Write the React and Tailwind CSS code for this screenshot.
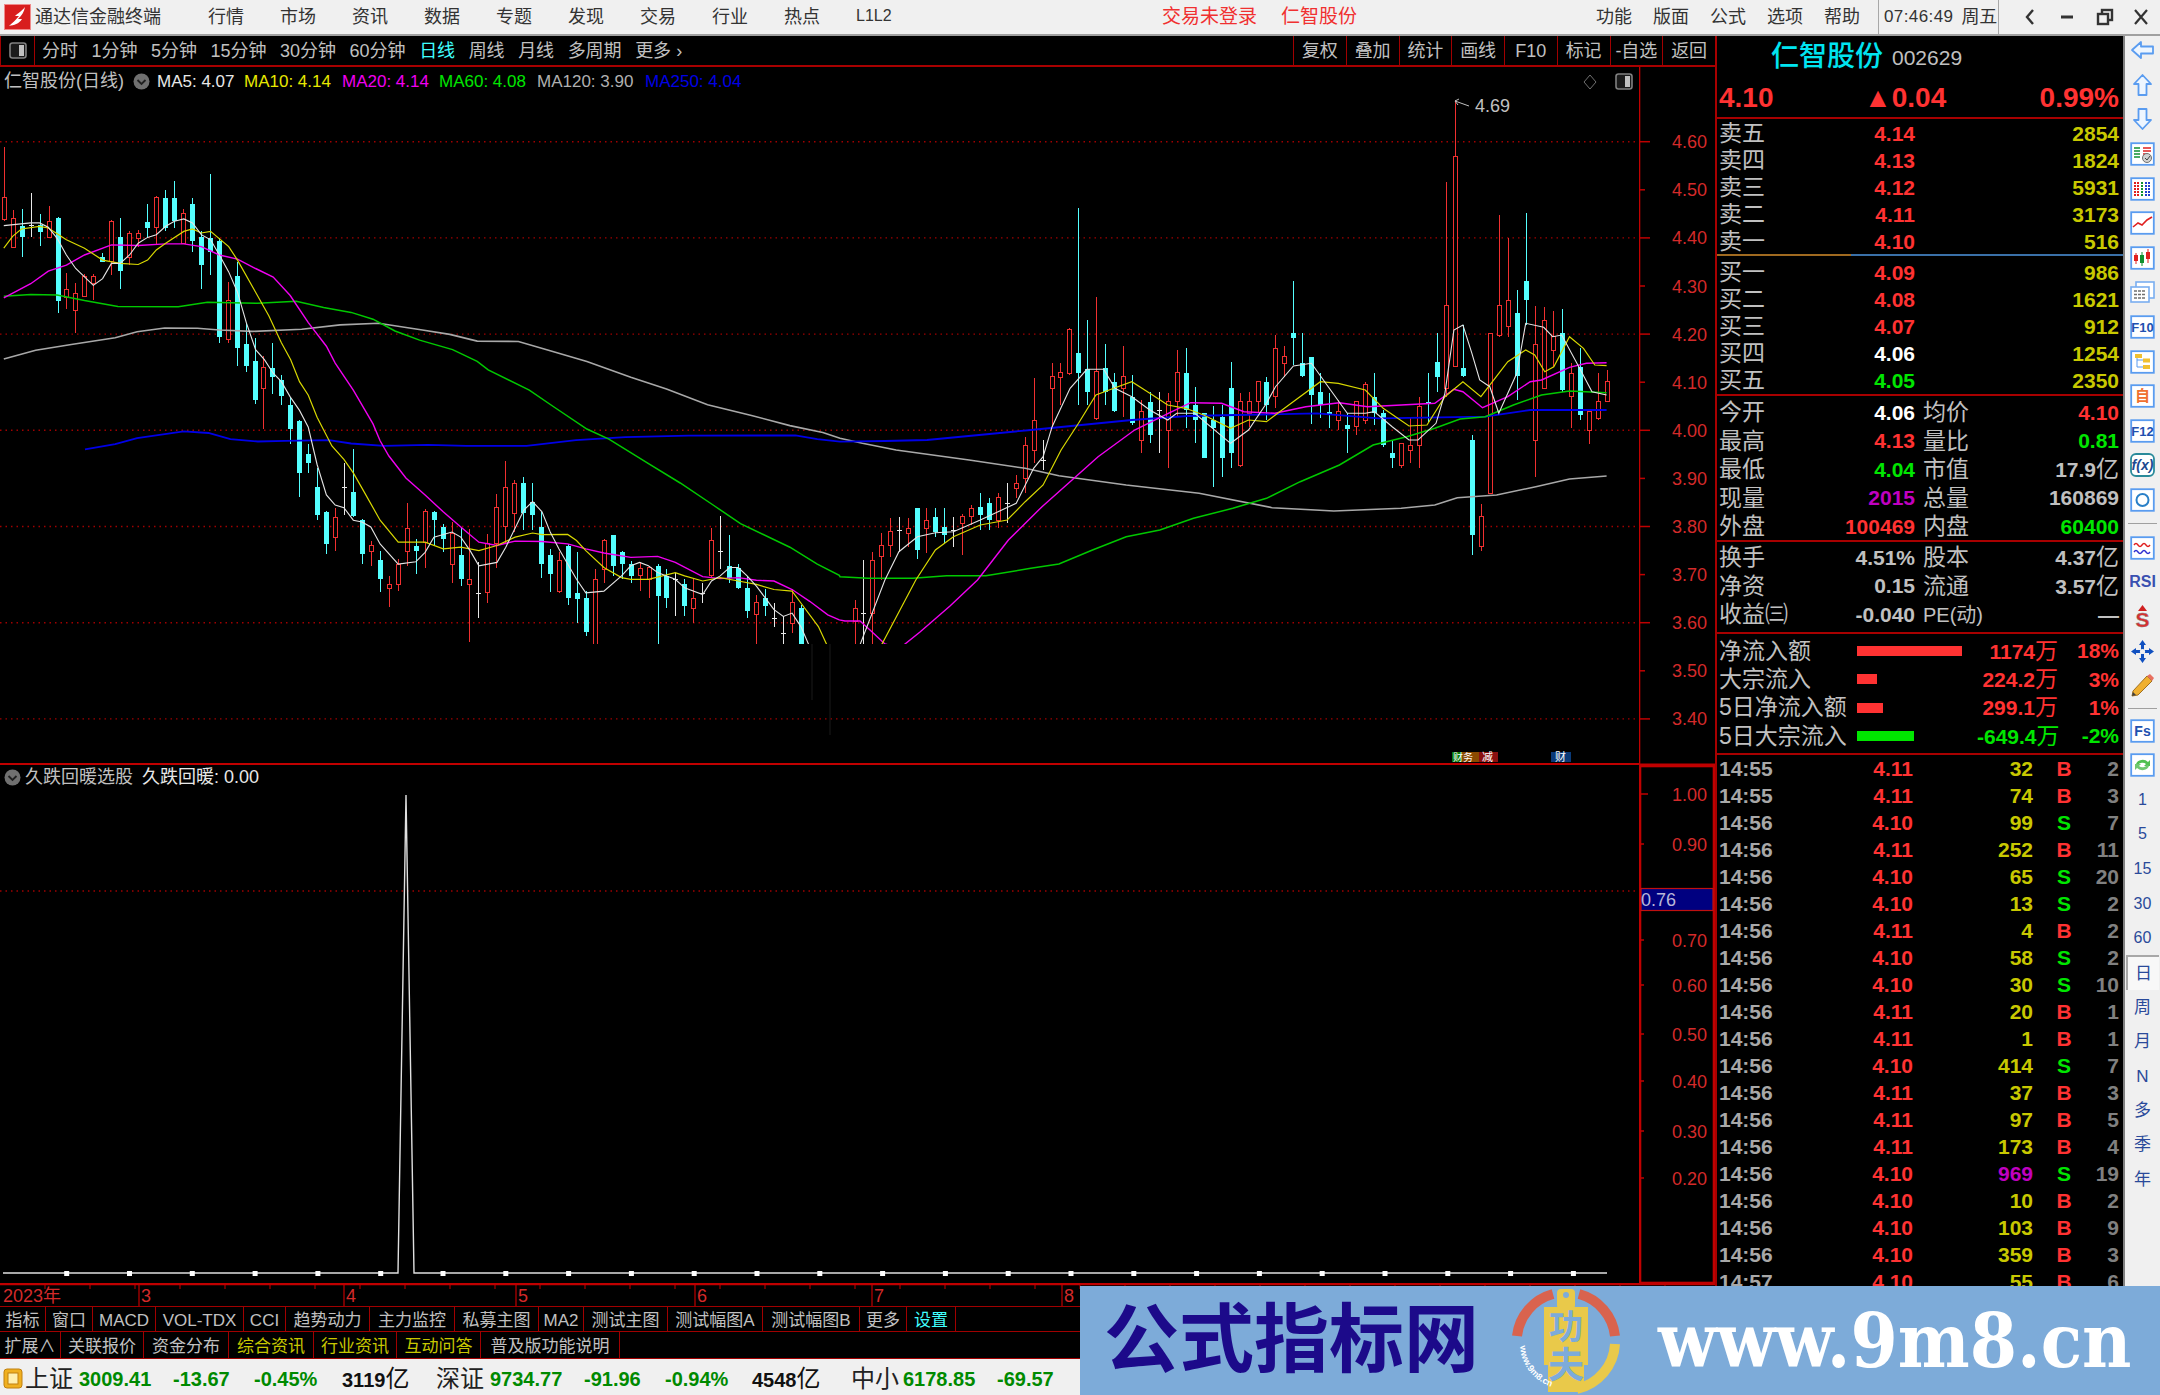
import React from "react";

const Z7X = (x) => x / 1.823;
const Z7Y = (y) => 130 + y / 2.96;
const Z8X = (x) => 840 + x / 1.782;
const Z8Y = (y) => 80 + y / 3;
const CX = (i) => 3.8 + i * 8.955;

const c7 = [
  ["r",50,200,265,270],["r",238,262,347,347],["c",235,285,318,375],["w",187,280,280,318],["c",250,282,303,342],["r",225,272,318,320],["c",258,260,505,542],["r",423,473,495,530],["r",452,485,535,600],["r",425,433,493,495],
  ["r",425,433,455,502],["c",365,375,390,392],["r",265,272,390,430],["c",260,318,418,470],["r",300,305,378,400],["r",295,305,320,345],["c",220,272,290,320],["r",195,200,288,340],["c",178,200,290,300],["c",150,200,270,290],
  ["r",235,248,335,335],["c",200,218,330,360],["c",300,318,400,470],["c",130,320,360,430],["c",320,330,612,630],["r",450,505,620,630],["c",390,432,645,700],["c",570,632,700,715],["c",615,685,800,812],["r",670,702,765,885],
  ["c",630,703,730,780],["c",725,740,788,815],["c",790,815,885,930],["c",858,860,1015,1085],["c",930,958,985,1015],["c",1000,1058,1140,1155],["c",1128,1130,1225,1255],["r",1120,1148,1205,1245],["w",987,1058,1060,1140],["c",945,1072,1142,1145],
  ["c",1150,1155,1255,1285],["r",1218,1230,1247,1290],["c",1245,1272,1328,1368],["r",1320,1345,1358,1412],["r",1270,1285,1345,1365],["r",1105,1180,1248,1290],["c",1210,1230,1245,1315],["r",1122,1130,1222,1295],["c",1128,1130,1155,1230],["c",1165,1175,1212,1250],
  ["r",1160,1195,1285,1340],["c",1175,1258,1330,1350],["r",1180,1330,1345,1515],["w",1280,1370,1372,1445],["r",1195,1225,1370,1400],["r",1078,1118,1225,1297],["r",980,1058,1175,1225],["r",1035,1045,1135,1190],["c",1028,1045,1135,1185],["c",1045,1100,1140,1185],
  ["c",1130,1175,1285,1325],["c",1240,1258,1315,1368],["r",1250,1275,1365,1370],["c",1225,1230,1385,1405],["c",1250,1370,1388,1458],["c",1365,1385,1485,1498],["r",1300,1330,1530,1530],["r",1210,1215,1300,1340],["c",1200,1200,1290,1320],["c",1245,1248,1285,1330],
  ["c",1275,1285,1320,1340],["r",1280,1298,1320,1365],["r",1290,1295,1330,1385],["c",1285,1290,1380,1530],["c",1300,1320,1385,1415],["w",1310,1330,1332,1440],["c",1330,1345,1410,1440],["r",1330,1388,1415,1460],["w",1340,1370,1372,1400],["r",1178,1215,1320,1325],
  ["w",1143,1245,1247,1298],["c",1200,1290,1325,1340],["c",1285,1295,1355,1360],["c",1320,1355,1425,1445],["r",1375,1400,1435,1530],["c",1360,1385,1410,1440],["w",1400,1445,1447,1470],["w",1440,1490,1492,1530],["r",1360,1400,1460,1490],["c",1405,1415,1530,1530],
];
const c95 = ["r",1390,1415,1455,1530];
const c8 = [
  ["w",1440,1600,1602,1700],["r",1415,1440,1600,1700],["r",1360,1395,1430,1500],["r",1315,1355,1395,1430],["w",1310,1350,1352,1415],["r",1315,1345,1360,1400],["c",1283,1283,1410,1438],["r",1285,1320,1345,1420],["c",1285,1310,1355,1370],["c",1285,1340,1365,1390],
  ["w",1310,1350,1352,1400],["r",1303,1310,1330,1425],["r",1275,1285,1310,1335],["c",1240,1280,1305,1350],["c",1255,1270,1320,1350],["r",1240,1252,1320,1345],["w",1210,1270,1272,1330],["r",1185,1210,1225,1255],["r",1070,1095,1195,1240],["r",895,1020,1110,1150],
  ["w",1080,1140,1142,1170],["r",850,890,925,1040],["r",850,878,892,975],["r",745,747,880,885],["c",385,818,878,975],["c",720,868,935,975],["r",652,875,1015,1020],["c",792,865,935,975],["c",880,905,992,995],["r",797,890,925,1010],
  ["c",885,950,1030,1035],["r",960,995,1082,1118],["c",935,965,1065,1090],["w",935,990,992,1120],["r",940,965,1050,1165],["r",810,878,965,1010],["c",805,878,990,1045],["c",920,975,1020,1090],["c",1000,1000,1135,1135],["c",978,1020,1045,1222],
  ["c",975,1010,1135,1190],["c",845,925,1118,1165],["r",940,965,1155,1162],["r",935,965,1000,1040],["r",905,905,965,1000],["c",890,905,975,1020],["r",765,805,950,985],["r",797,830,850,890],["c",602,760,773,855],["c",760,848,888,890],
  ["c",830,832,945,1032],["c",880,935,975,1015],["c",940,995,1003,1045],["r",960,995,1020,1050],["c",1000,1035,1048,1120],["r",965,965,1040,1065],["r",905,912,1020,1032],["c",878,950,1000,1035],["c",990,1000,1095,1100],["c",1080,1120,1135,1165],
  ["r",1090,1090,1155,1163],["r",1012,1095,1110,1150],["r",950,980,1095,1165],["c",878,965,972,1025],["c",760,845,890,935],["r",305,675,925,950],["r",60,228,860,860],["c",735,865,888,890],["c",1065,1080,1365,1425],["r",1272,1310,1400,1412],
  ["r",760,760,1240,1240],["r",405,675,765,770],["r",475,660,738,770],["c",630,700,888,960],["c",400,602,660,735],["r",678,792,1082,1190],["r",680,720,925,925],["r",693,770,810,860],["c",688,760,930,935],["r",850,880,950,1045],
  ["c",805,862,1005,1020],["r",995,995,1050,1092],["r",880,965,1015,1020],["r",870,905,965,965],
];
const candles = [
  ...c7.map((c, i) => ({ i, t: c[0], v: c.slice(1).map(Z7Y) })),
  { i: 95, t: c95[0], v: c95.slice(1).map(Z7Y) },
  ...c8.map((c, k) => ({ i: 96 + k, t: c[0], v: c.slice(1).map(Z8Y) })),
];

const pts = (z7, mid, z8) =>
  [
    ...z7.filter((p) => Z7X(p[0]) < 840).map((p) => [Z7X(p[0]), Z7Y(p[1])]),
    ...mid,
    ...z8.map((p) => [Z8X(p[0]), Z8Y(p[1])]),
  ]
    .map((p) => p[0].toFixed(1) + "," + p[1].toFixed(1))
    .join(" ");

const ma5 = pts(
  [[7,283],[56,275],[72,275],[88,288],[104,320],[121,370],[138,410],[170,460],[187,440],[203,395],[219,395],[236,370],[252,335],[269,318],[285,310],[302,285],[318,270],[335,263],[351,275],[367,310],[384,325],[400,370],[417,420],[433,480],[449,570],[466,650],[482,680],[498,720],[513,745],[529,790],[546,830],[562,880],[578,990],[595,1080],[611,1110],[627,1118],[644,1155],[660,1160],[676,1175],[693,1225],[726,1285],[758,1278],[775,1250],[791,1205],[824,1190],[840,1205],[857,1245],[873,1290],[906,1280],[922,1235],[955,1125],[971,1100],[988,1130],[1003,1190],[1019,1240],[1035,1285],[1051,1330],[1068,1370],[1101,1365],[1133,1320],[1150,1290],[1166,1280],[1182,1290],[1199,1310],[1215,1320],[1231,1330],[1248,1355],[1281,1375],[1297,1335],[1313,1320],[1330,1295],[1346,1295],[1362,1320],[1379,1350],[1395,1385],[1411,1420],[1428,1440],[1444,1430],[1460,1470],[1476,1530]],
  [[830,700],[858,650]],
  [[80,1500],[105,1415],[138,1370],[170,1358],[202,1355],[250,1320],[314,1270],[345,1165],[362,1130],[378,1040],[410,925],[440,868],[470,868],[490,925],[520,950],[552,990],[584,1020],[600,1000],[632,1000],[664,1045],[696,1090],[728,1050],[760,970],[776,920],[808,858],[840,850],[872,925],[904,1000],[936,1000],[952,995],[984,1040],[1014,1080],[1030,1080],[1062,1030],[1078,940],[1094,750],[1110,735],[1126,820],[1140,900],[1158,920],[1174,1000],[1206,880],[1222,730],[1254,742],[1270,770],[1286,765],[1318,865],[1340,935],[1366,945]]
);
const ma10 = pts(
  [[7,350],[23,315],[39,293],[72,285],[88,290],[121,325],[154,350],[187,385],[219,395],[252,398],[269,385],[285,355],[302,335],[335,300],[351,293],[367,305],[384,300],[417,345],[433,385],[466,480],[490,550],[513,630],[530,680],[546,745],[562,785],[578,850],[605,935],[627,975],[644,1015],[660,1060],[693,1155],[726,1220],[775,1220],[808,1240],[840,1235],[873,1245],[906,1230],[939,1205],[971,1193],[988,1198],[1035,1197],[1051,1215],[1068,1245],[1101,1295],[1133,1325],[1150,1330],[1182,1330],[1231,1310],[1248,1320],[1281,1335],[1313,1325],[1346,1335],[1379,1345],[1411,1360],[1444,1365],[1460,1400],[1492,1470],[1509,1530]],
  [[860,700],[882,644]],
  [[135,1500],[170,1410],[202,1370],[250,1335],[298,1320],[330,1265],[362,1215],[394,1110],[425,1030],[456,945],[488,925],[520,905],[552,940],[584,975],[616,985],[648,1005],[696,1045],[728,1020],[760,1025],[792,985],[856,905],[888,910],[936,930],[968,985],[1014,1038],[1046,1035],[1078,950],[1110,905],[1142,950],[1174,880],[1190,845],[1222,810],[1238,825],[1256,875],[1272,860],[1300,770],[1325,805],[1345,855],[1366,857]]
);
const ma20 = pts(
  [[7,497],[56,455],[88,418],[121,400],[154,370],[203,340],[252,342],[302,337],[335,337],[367,345],[400,370],[433,382],[466,410],[498,435],[529,490],[562,570],[595,640],[611,690],[644,770],[680,870],[693,920],[709,965],[740,1030],[775,1080],[808,1130],[840,1175],[873,1220],[906,1230],[939,1217],[988,1218],[1035,1225],[1068,1240],[1101,1252],[1150,1265],[1199,1262],[1231,1280],[1281,1322],[1313,1328],[1346,1325],[1379,1333],[1411,1335],[1444,1360],[1476,1395],[1509,1435],[1530,1450]],
  [[845,621],[860,621],[870,630],[885,644],[900,648],[920,632],[950,606]],
  [[245,1500],[300,1380],[360,1280],[420,1190],[460,1130],[525,1050],[585,1000],[625,968],[680,970],[720,995],[775,1000],[830,980],[890,968],[940,980],[1000,975],[1060,970],[1094,928],[1110,935],[1145,983],[1190,950],[1230,905],[1250,900],[1300,862],[1330,850],[1366,848]]
);
const ma60 = pts(
  [[7,492],[56,487],[104,488],[154,505],[215,522],[325,523],[378,510],[470,513],[540,507],[590,525],[640,540],[680,560],[720,595],[765,622],[825,650],[870,685],[890,710],[965,770],[1010,820],[1070,885],[1110,915],[1180,985],[1240,1045],[1300,1110],[1350,1165],[1440,1235],[1490,1285],[1530,1318]],
  [],
  [[0,1490],[50,1495],[130,1495],[190,1487],[260,1487],[340,1465],[390,1452],[450,1410],[510,1370],[570,1350],[630,1315],[700,1285],[760,1255],[820,1205],[890,1155],[950,1095],[1010,1070],[1060,1045],[1105,1017],[1150,1010],[1200,975],[1250,945],[1300,933],[1366,938]]
);
const ma120 = pts(
  [[7,678],[65,652],[130,635],[210,615],[250,597],[300,586],[360,587],[400,592],[460,596],[550,590],[620,577],[690,572],[770,592],[820,605],[870,625],[945,626],[1000,652],[1070,685],[1150,732],[1215,767],[1290,813],[1370,845],[1440,875],[1500,895]],
  [],
  [[0,1075],[40,1090],[100,1110],[230,1140],[330,1165],[390,1187],[510,1215],[640,1240],[770,1283],[880,1293],[1000,1285],[1060,1275],[1100,1253],[1170,1245],[1240,1220],[1300,1197],[1366,1188]]
);
const ma250 = pts(
  [[155,945],[210,930],[250,912],[335,892],[380,897],[420,915],[470,922],[520,920],[600,918],[640,928],[700,935],[780,932],[850,935],[960,935],[1050,918],[1140,909],[1255,905],[1450,904],[1490,915]],
  [],
  [[0,1085],[80,1083],[155,1080],[340,1050],[520,1020],[620,1008],[850,1000],[960,1015],[1150,1010],[1230,990],[1366,990]]
);

const priceY = (p) => 141.7 + (4.6 - p) * 481;
const prices = [4.6, 4.5, 4.4, 4.3, 4.2, 4.1, 4.0, 3.9, 3.8, 3.7, 3.6, 3.5, 3.4];

const MainChart = () => (
  <svg className="block w-[1639px] h-[667px]" viewBox="0 96 1639 667">
    <defs>
      <clipPath id="clipc"><rect x="0" y="96" width="1639" height="548" /></clipPath>
    </defs>
    {[4.6, 4.4, 4.2, 4.0, 3.8, 3.6, 3.4].map((p) => (
      <line key={p} x1="0" x2="1639" y1={priceY(p)} y2={priceY(p)} stroke="#a00000" strokeWidth="1.4" strokeDasharray="1.5 4" />
    ))}
    <line x1="812" x2="812" y1="644" y2="700" stroke="#1a1a1a" />
    <line x1="830" x2="830" y1="644" y2="735" stroke="#1a1a1a" />
    <g clipPath="url(#clipc)">
      {candles.map((c) => {
        const x = Math.round(CX(c.i));
        const [h, t, b, l] = c.v;
        const col = c.t === "r" ? "#f03030" : c.t === "c" ? "#54ffff" : "#e8e8e8";
        return (
          <g key={c.i} shapeRendering="crispEdges">
            <line x1={x + 0.5} x2={x + 0.5} y1={h} y2={l} stroke={col} strokeWidth="1" />
            {c.t === "r" && <rect x={x - 1.5} y={t} width="4" height={Math.max(b - t, 1)} fill="#000" stroke={col} strokeWidth="1" />}
            {c.t === "c" && <rect x={x - 2} y={t} width="5" height={Math.max(b - t, 1)} fill={col} />}
            {c.t === "w" && <rect x={x - 2} y={t} width="5" height="1" fill={col} />}
          </g>
        );
      })}
      <polyline points={ma120} fill="none" stroke="#a8a8a8" strokeWidth="1.6" />
      <polyline points={ma250} fill="none" stroke="#0000e6" strokeWidth="1.8" />
      <polyline points={ma60} fill="none" stroke="#00c800" strokeWidth="1.5" />
      <polyline points={ma20} fill="none" stroke="#f000f0" strokeWidth="1.4" />
      <polyline points={ma10} fill="none" stroke="#d8d800" strokeWidth="1.2" />
      <polyline points={ma5} fill="none" stroke="#e4e4e4" strokeWidth="1.1" />
    </g>
    <path d="M1455 101 l14 5 M1455 101 l4 -2 M1455 101 l3 4" stroke="#c0c0c0" strokeWidth="1" fill="none" />
    <text x="1475" y="112" fontSize="18" fill="#c0c0c0">4.69</text>
    <rect x="1452" y="752" width="10" height="10" fill="#0a7a0a" />
    <rect x="1462" y="752" width="17" height="10" fill="#8a4a00" />
    <rect x="1479" y="752" width="19" height="10" fill="#8a1010" />
    <rect x="1551" y="752" width="20" height="10" fill="#0a3a78" />
    <text x="1453" y="761" fontSize="10" fill="#fff">财务</text>
    <text x="1482" y="761" fontSize="11" fill="#fff">减</text>
    <text x="1555" y="761" fontSize="11" fill="#fff">财</text>
  </svg>
);

const MainAxis = () => (
  <svg className="block w-[76px] h-[698px]" viewBox="1639 67 76 698">
    <line x1="1639.5" x2="1639.5" y1="67" y2="765" stroke="#c00000" strokeWidth="1.6" />
    <line x1="1639" x2="1715" y1="764.5" y2="764.5" stroke="#c00000" strokeWidth="2" />
    {prices.map((p, k) => (
      <g key={p}>
        <line x1="1640" x2={k % 2 ? 1645 : 1650} y1={priceY(p)} y2={priceY(p)} stroke="#c00000" strokeWidth="1.5" />
        <text x="1707" y={priceY(p) + 6.5} textAnchor="end" fontSize="18" fill="#d42a2a">{p.toFixed(2)}</text>
      </g>
    ))}
  </svg>
);

const dots = [];
for (let k = 0; k < 6; k++) dots.push(66.7 + k * 62.8);
for (let k = 0; k < 19; k++) dots.push(443 + k * 62.8);

const LowChart = () => (
  <svg className="block w-[1639px] h-[494px]" viewBox="0 789 1639 494">
    <line x1="0" x2="1639" y1="891" y2="891" stroke="#a00000" strokeWidth="1.4" strokeDasharray="1.5 4" />
    <polyline points="3,1273 398,1273 406,795 414,1273 1607,1273" fill="none" stroke="#e0e0e0" strokeWidth="1.4" />
    {dots.map((x) => (
      <rect key={x} x={x - 2.5} y="1271" width="5" height="5" fill="#ffffff" />
    ))}
  </svg>
);

const lowTicks = [["1.00", 794], ["0.90", 844], ["0.80", 893], ["0.70", 940], ["0.60", 985], ["0.50", 1034], ["0.40", 1081], ["0.30", 1131], ["0.20", 1178]];
const LowAxis = () => (
  <svg className="block w-[76px] h-[518px]" viewBox="1639 765 76 518">
    <rect x="1640" y="766" width="74" height="517" fill="none" stroke="#c00000" strokeWidth="2.6" />
    {lowTicks.map(([l, y], k) => (
      <g key={l}>
        <line x1="1641" x2={k === 0 ? 1648 : 1644} y1={y} y2={y} stroke="#c00000" strokeWidth="1.5" />
        {l !== "0.80" && <text x="1707" y={y + 6.5} textAnchor="end" fontSize="18" fill="#d42a2a">{l}</text>}
      </g>
    ))}
    <rect x="1641" y="888.5" width="72" height="22" fill="#000080" stroke="#c01010" strokeWidth="1.2" />
    <text x="1641" y="906" fontSize="18" fill="#b8b8d8">0.76</text>
  </svg>
);

const xt = [];
for (let k = 1; k < 38; k++) xt.push(k * 45);
const XAxis = () => (
  <svg className="block w-[1715px] h-[23px]" viewBox="0 1283 1715 23">
    {xt.map((x) => (
      <line key={x} x1={x} x2={x} y1="1285" y2="1289" stroke="#c00000" />
    ))}
    {[139, 344, 516, 695, 872, 1062].map((x) => (
      <line key={x} x1={x} x2={x} y1="1285" y2="1306" stroke="#c00000" strokeWidth="1.2" />
    ))}
    <line x1="0" x2="1715" y1="1284" y2="1284" stroke="#c00000" strokeWidth="2.4" />
    <text x="3" y="1302" fontSize="18" fill="#d42a2a">2023年</text>
    <text x="141" y="1302" fontSize="18" fill="#d42a2a">3</text>
    <text x="346" y="1302" fontSize="18" fill="#d42a2a">4</text>
    <text x="518" y="1302" fontSize="18" fill="#d42a2a">5</text>
    <text x="697" y="1302" fontSize="18" fill="#d42a2a">6</text>
    <text x="874" y="1302" fontSize="18" fill="#d42a2a">7</text>
    <text x="1064" y="1302" fontSize="18" fill="#d42a2a">8</text>
  </svg>
);

const PanelIcon = () => (
  <svg width="18" height="17" viewBox="0 0 18 17">
    <rect x="1" y="1" width="16" height="15" rx="2.5" fill="#1a1a1a" stroke="#808080" strokeWidth="1.6" />
    <rect x="10" y="3" width="5" height="11" fill="#c0c0c0" />
  </svg>
);

const Logo = () => (
  <svg width="27" height="26" viewBox="0 0 27 26">
    <rect width="27" height="26" fill="#d81e1e" />
    <rect x="0.5" y="0.5" width="26" height="25" fill="none" stroke="#f08a8a" />
    <path d="M21 3 C17 8 14 9 11 12 L15 12 C12 16 8 19 5 22 C10 21 15 20 18 15 L14 15 C18 11 20 8 21 3 Z" fill="#ffffff" />
  </svg>
);

const Box = ({ children }) => (
  <svg width="25" height="24" viewBox="0 0 25 24">
    <rect x="1.2" y="1.2" width="22.6" height="21.6" fill="#ffffff" stroke="#5a9cf0" strokeWidth="1.8" />
    {children}
  </svg>
);
const BoxText = ({ t, c = "#2050b0", s = 14 }) => (
  <Box>
    <text x="12.5" y="17" textAnchor="middle" fontSize={s} fontWeight="700" fill={c}>{t}</text>
  </Box>
);
const Arrow = ({ d }) => (
  <svg width="25" height="24" viewBox="0 0 25 24">
    <path d={d} fill="#eef6ff" stroke="#5a9cf0" strokeWidth="1.8" strokeLinejoin="round" />
  </svg>
);

const icons1 = [
  <Arrow key="a" d="M2 12 L11 4 V8.5 H23 V15.5 H11 V20 Z" />,
  <Arrow key="b" d="M12.5 2 L21 11 H16.5 V22 H8.5 V11 H4 Z" />,
  <Arrow key="c" d="M12.5 22 L21 13 H16.5 V2 H8.5 V13 H4 Z" />,
  <Box key="d">
    <path d="M4 6h6M4 9h6M4 12h6M4 15h6" stroke="#109030" strokeWidth="1.6" />
    <path d="M13 6h8M13 9h8M13 12h4" stroke="#e02020" strokeWidth="1.6" />
    <circle cx="17" cy="16" r="4.5" fill="#d0d0d0" stroke="#707070" />
    <path d="M15 16l2 2 3-4" stroke="#404040" fill="none" />
  </Box>,
  <Box key="e">
    <path d="M5 5v14M8 5v14" stroke="#e02020" strokeWidth="2" strokeDasharray="2 1" />
    <path d="M12 5v14" stroke="#109030" strokeWidth="2" strokeDasharray="2 1" />
    <path d="M16 5v14M19 5v14" stroke="#2040d0" strokeWidth="2" strokeDasharray="2 1" />
  </Box>,
  <Box key="f">
    <path d="M3 16 L8 12 L12 14 L17 9 L22 6" stroke="#e02020" strokeWidth="1.6" fill="none" />
  </Box>,
  <Box key="g">
    <path d="M6 7v11M18 3v14" stroke="#e02020" />
    <rect x="4" y="9" width="4" height="6" fill="#e02020" />
    <path d="M12 6v14" stroke="#109030" />
    <rect x="10" y="9" width="4" height="8" fill="#109030" />
    <rect x="16" y="6" width="4" height="7" fill="#e02020" />
  </Box>,
  <svg key="h" width="25" height="24" viewBox="0 0 25 24">
    <rect x="6" y="2" width="18" height="16" fill="#fff" stroke="#7aaef0" strokeWidth="1.6" />
    <rect x="1" y="7" width="18" height="15" fill="#fff" stroke="#7aaef0" strokeWidth="1.6" />
    <path d="M4 11h12M4 14.5h12M4 18h12" stroke="#707070" strokeWidth="1.6" strokeDasharray="3 1" />
  </svg>,
  <BoxText key="i" t="F10" s={13} />,
  <Box key="j">
    <path d="M7 6v11h6M7 10h6" stroke="#5a9cf0" fill="none" />
    <rect x="5" y="4" width="7" height="4" fill="#f0c030" />
    <rect x="13" y="8.5" width="7" height="4" fill="#f0c030" />
    <rect x="13" y="15" width="7" height="4" fill="#f0c030" />
  </Box>,
  <BoxText key="k" t="自" c="#f07030" s={15} />,
  <BoxText key="l" t="F12" s={13} />,
  <svg key="m" width="25" height="24" viewBox="0 0 25 24">
    <rect x="1" y="1" width="23" height="22" rx="5" fill="#fff" stroke="#2a8a9a" strokeWidth="1.8" />
    <text x="12.5" y="17" textAnchor="middle" fontSize="14" fontStyle="italic" fontWeight="700" fill="#204a90">f(x)</text>
  </svg>,
  <Box key="n">
    <circle cx="12.5" cy="12" r="6" fill="none" stroke="#2a80c8" strokeWidth="2" />
  </Box>,
];
const icons2 = [
  <Box key="a">
    <path d="M4 9 q2 -3 4 0 t4 0 t4 0 t4 0" stroke="#e02020" fill="none" strokeWidth="1.4" />
    <path d="M4 16 q2 -3 4 0 t4 0 t4 0 t4 0" stroke="#3030d0" fill="none" strokeWidth="1.4" />
  </Box>,
  <span key="b" className="text-[16px] font-bold text-[#3a50b0] leading-none">RSI</span>,
  <svg key="c" width="25" height="26" viewBox="0 0 25 26">
    <path d="M12.5 1 L17 7 H8 Z" fill="#d02020" />
    <text x="12.5" y="23" textAnchor="middle" fontSize="21" fontWeight="700" fill="#d83030" stroke="#888" strokeWidth="0.4">S</text>
  </svg>,
  <svg key="d" width="25" height="25" viewBox="0 0 25 25">
    <path d="M12.5 1 L16 6 H14 V11 H19 V9 L24 12.5 L19 16 V14 H14 V19 H16 L12.5 24 L9 19 H11 V14 H6 V16 L1 12.5 L6 9 V11 H11 V6 H9 Z" fill="#1050c0" />
    <circle cx="12.5" cy="12.5" r="2.6" fill="#f0f0f0" />
  </svg>,
  <svg key="e" width="25" height="25" viewBox="0 0 25 25">
    <path d="M3 18 L17 3 L22 8 L8 22 L2 23 Z" fill="#f0b030" stroke="#a07020" />
    <path d="M17 3 L22 8 L24 5 L20 1 Z" fill="#e87060" />
    <path d="M2 23 L3 19 L6 22 Z" fill="#404040" />
  </svg>,
];
const nums = ["1", "5", "15", "30", "60"];
const chars = ["周", "月", "N", "多", "季", "年"];

const Sidebar = () => (
  <div className="w-[37px] h-full bg-[#f0f0f0] border-l-2 border-[#808080] flex flex-col overflow-hidden">
    <div className="flex flex-col mt-[-3px]">
      {icons1.map((ic, i) => (
        <div key={i} className="h-[34.6px] flex items-center justify-center shrink-0">{ic}</div>
      ))}
    </div>
    <div className="h-[13px] flex items-center shrink-0 px-[3px]"><div className="w-full h-px bg-[#a0a0a0]" /></div>
    <div className="flex flex-col">
      {icons2.map((ic, i) => (
        <div key={i} className="h-[34.6px] flex items-center justify-center shrink-0">{ic}</div>
      ))}
    </div>
    <div className="h-[10px] flex items-center shrink-0 px-[3px]"><div className="w-full h-px bg-[#a0a0a0]" /></div>
    <div className="h-[34.6px] flex items-center justify-center shrink-0"><BoxText t="Fs" /></div>
    <div className="h-[34.6px] flex items-center justify-center shrink-0">
      <Box>
        <path d="M6 11 a7 6 0 0 1 12 -2 l2 -2 v6 h-6 l2 -2 a5 4 0 0 0 -8 1 Z" fill="#50c050" />
        <path d="M19 13 a7 6 0 0 1 -12 2 l-2 2 v-6 h6 l-2 2 a5 4 0 0 0 8 -1 Z" fill="#70c870" />
      </Box>
    </div>
    {nums.map((n) => (
      <div key={n} className="h-[34.6px] flex items-center justify-center shrink-0 text-[16px] text-[#2a4a9a]">{n}</div>
    ))}
    <div className="h-[35px] mx-[1px] flex items-center justify-center shrink-0 text-[17px] text-[#2a4a9a] bg-[#f8f8f8] border-t-2 border-l-2 border-[#a8a8a8]">日</div>
    {chars.map((n) => (
      <div key={n} className="h-[34.4px] flex items-center justify-center shrink-0 text-[17px] text-[#2a4a9a]">{n}</div>
    ))}
  </div>
);

const RED = "text-[#ff3232]";
const GRN = "text-[#00e600]";
const YEL = "text-[#c8c800]";
const GRY = "text-[#c0c0c0]";

const OrderRow = ({ l, p, pc = RED, v }) => (
  <div className="h-[27px] pt-[2px] flex items-center">
    <span className={"w-[60px] text-[23px] whitespace-nowrap " + GRY}>{l}</span>
    <span className={"w-[136px] text-right font-bold " + pc}>{p}</span>
    <span className={"flex-1 text-right font-bold " + YEL}>{v}</span>
  </div>
);
const InfoRow = ({ l, p, pc = GRY, l2, v, vc = GRY, h = "h-[28.5px]" }) => (
  <div className={h + " pt-[2px] flex items-center"}>
    <span className={"w-[60px] text-[23px] whitespace-nowrap " + GRY}>{l}</span>
    <span className={"w-[136px] text-right font-bold " + pc}>{p}</span>
    <span className={"w-[8px]"} />
    <span className={"w-[60px] text-[23px] whitespace-nowrap " + GRY}>{l2}</span>
    <span className={"flex-1 text-right font-bold whitespace-nowrap " + vc}>{v}</span>
  </div>
);
const FlowRow = ({ l, w, col, c, v, pct }) => (
  <div className="h-[28.3px] pt-[2px] flex items-center">
    <span className={"w-[138px] shrink-0 text-[23px] whitespace-nowrap " + GRY}>{l}</span>
    <div className="w-[120px] shrink-0 flex"><div className={"h-[10px] " + col} style={{ width: w }} /></div>
    <span className={"w-[81px] shrink-0 text-right font-bold whitespace-nowrap " + c}>{v}<span className="text-[23px] font-normal">万</span></span>
    <span className={"flex-1 text-right font-bold " + c}>{pct}</span>
  </div>
);

const ticks = [
  ["14:55","4.11","32","B","2"],["14:55","4.11","74","B","3"],["14:56","4.10","99","S","7"],["14:56","4.11","252","B","11"],["14:56","4.10","65","S","20"],
  ["14:56","4.10","13","S","2"],["14:56","4.11","4","B","2"],["14:56","4.10","58","S","2"],["14:56","4.10","30","S","10"],["14:56","4.11","20","B","1"],
  ["14:56","4.11","1","B","1"],["14:56","4.10","414","S","7"],["14:56","4.11","37","B","3"],["14:56","4.11","97","B","5"],["14:56","4.11","173","B","4"],
  ["14:56","4.10","969","S","19"],["14:56","4.10","10","B","2"],["14:56","4.10","103","B","9"],["14:56","4.10","359","B","3"],["14:57","4.10","55","B","6"],
];

const RightPanel = () => (
  <div className="w-[408px] h-full border-l-2 border-[#a80000] flex flex-col pl-[2px] pr-[4px] text-[21px] overflow-hidden">
    <div className="h-[83px] shrink-0 border-b-2 border-[#a80000] -mr-[4px] -ml-[2px] pl-[2px] pr-[4px] flex flex-col">
      <div className="h-[36px] pt-[6px] flex items-center pl-[52px]">
        <span className="text-[28px] font-medium text-[#00e4f0] leading-none">仁智股份</span>
        <span className="ml-[9px] text-[#c0c0c0] mt-[2px]">002629</span>
      </div>
      <div className="flex-1 pt-[5px] flex items-center text-[28px] font-bold text-[#ff3232]">
        <span className="w-[145px]">4.10</span>
        <span className="w-[171px]">▲0.04</span>
        <span className="flex-1 text-right">0.99%</span>
      </div>
    </div>
    <div className="shrink-0">
      <OrderRow l="卖五" p="4.14" v="2854" />
      <OrderRow l="卖四" p="4.13" v="1824" />
      <OrderRow l="卖三" p="4.12" v="5931" />
      <OrderRow l="卖二" p="4.11" v="3173" />
      <OrderRow l="卖一" p="4.10" v="516" />
    </div>
    <div className="h-[2px] shrink-0 flex -mr-[4px] -ml-[2px]">
      <div className="w-[134px] bg-[#a06a20]" />
      <div className="flex-1 bg-[#3a70a8]" />
    </div>
    <div className="shrink-0 pt-[2px] pb-[1px] border-b-2 border-[#a80000] -mr-[4px] -ml-[2px] pl-[2px] pr-[4px]">
      <OrderRow l="买一" p="4.09" v="986" />
      <OrderRow l="买二" p="4.08" v="1621" />
      <OrderRow l="买三" p="4.07" v="912" />
      <OrderRow l="买四" p="4.06" pc="text-white" v="1254" />
      <OrderRow l="买五" p="4.05" pc={GRN} v="2350" />
    </div>
    <div className="shrink-0 pt-[1px] border-b-2 border-[#a80000] -mr-[4px] -ml-[2px] pl-[2px] pr-[4px]">
      <InfoRow l="今开" p="4.06" pc="text-white" l2="均价" v="4.10" vc={RED} />
      <InfoRow l="最高" p="4.13" pc={RED} l2="量比" v="0.81" vc={GRN} />
      <InfoRow l="最低" p="4.04" pc={GRN} l2="市值" v={<>17.9<span className="text-[23px] font-normal">亿</span></>} />
      <InfoRow l="现量" p="2015" pc="text-[#c000c0]" l2="总量" v="160869" />
      <InfoRow l="外盘" p="100469" pc={RED} l2="内盘" v="60400" vc={GRN} />
    </div>
    <div className="shrink-0 pt-[1px] pb-[5px] border-b-2 border-[#a80000] -mr-[4px] -ml-[2px] pl-[2px] pr-[4px]">
      <InfoRow h="h-[28.3px]" l="换手" p="4.51%" l2="股本" v={<>4.37<span className="text-[23px] font-normal">亿</span></>} />
      <InfoRow h="h-[28.3px]" l="净资" p="0.15" l2="流通" v={<>3.57<span className="text-[23px] font-normal">亿</span></>} />
      <InfoRow h="h-[28.3px]" l="收益㈢" p="-0.040" l2={<span className="text-[20px]">PE(动)</span>} v="—" />
    </div>
    <div className="shrink-0 pt-[1.5px] pb-[4px] border-b-2 border-[#a80000] -mr-[4px] -ml-[2px] pl-[2px] pr-[4px]">
      <FlowRow l="净流入额" w={105} col="bg-[#ff3232]" c={RED} v="1174" pct="18%" />
      <FlowRow l="大宗流入" w={20} col="bg-[#ff3232]" c={RED} v="224.2" pct="3%" />
      <FlowRow l="5日净流入额" w={26} col="bg-[#ff3232]" c={RED} v="299.1" pct="1%" />
      <FlowRow l="5日大宗流入" w={57} col="bg-[#00e600]" c={GRN} v="-649.4" pct="-2%" />
    </div>
    <div className="shrink-0">
      {ticks.map((t, i) => (
        <div key={i} className="h-[27px] flex items-center font-bold">
          <span className="w-[60px] text-[#a8a8a8]">{t[0]}</span>
          <span className={"w-[134px] text-right " + RED}>{t[1]}</span>
          <span className={"w-[120px] text-right " + (t[2] === "969" ? "text-[#c000c0]" : YEL)}>{t[2]}</span>
          <span className={"w-[62px] text-center " + (t[3] === "B" ? RED : GRN)}>{t[3]}</span>
          <span className="flex-1 text-right text-[#808080]">{t[4]}</span>
        </div>
      ))}
    </div>
  </div>
);

const Cell = ({ w, c = "text-[#c0c0c0]", children }) => (
  <div className={w + " h-full shrink-0 flex items-center justify-center pt-[3px] border-r border-[#a00000] whitespace-nowrap " + c}>{children}</div>
);

const CircleChevron = () => (
  <svg width="17" height="17" viewBox="0 0 17 17">
    <circle cx="8.5" cy="8.5" r="8" fill="#707070" />
    <path d="M4.5 7 L8.5 11 L12.5 7" stroke="#202020" strokeWidth="1.8" fill="none" />
  </svg>
);

const Watermark = () => (
  <div className="absolute right-0 bottom-0 w-[1080px] h-[109px] bg-[#7dabd9] flex items-center overflow-hidden">
    <span className="ml-[24px] w-[407px] shrink-0 text-[75px] leading-none font-bold text-[#1c0a8a] whitespace-nowrap">公式指标网</span>
    <svg width="110" height="109" viewBox="0 0 110 109" className="shrink-0">
      <defs><path id="wmarc" d="M9 60 A46 46 0 0 0 45 102" /></defs>
      <path d="M6 50 A49 49 0 0 1 42 8" fill="none" stroke="#d9634e" strokeWidth="10" />
      <path d="M68 8 A49 49 0 0 1 104 50" fill="none" stroke="#d9634e" strokeWidth="10" />
      <path d="M104 58 A49 49 0 0 1 66 103" fill="none" stroke="#e9c94a" strokeWidth="10" />
      <rect x="46" y="3" width="18" height="20" rx="4" fill="#e9c94a" />
      <rect x="33" y="21" width="44" height="58" fill="#e9c94a" />
      <rect x="37" y="79" width="36" height="27" fill="#e9c94a" />
      <circle cx="55" cy="9" r="3" fill="#7dabd9" />
      <text x="55" y="53" textAnchor="middle" fontSize="34" fontWeight="700" fill="#7dabd9">功</text>
      <text x="55" y="92" textAnchor="middle" fontSize="36" fontWeight="700" fill="#7dabd9">夫</text>
      <text fontSize="9" fill="#ffffff" fontWeight="700"><textPath href="#wmarc">www.9m8.cn</textPath></text>
    </svg>
    <span className="ml-[37px] shrink-0 font-['DejaVu_Serif',serif] font-bold text-[68px] leading-none scale-y-110 text-white whitespace-nowrap">www.9m8.cn</span>
  </div>
);

export default function App() {
  return (
    <div className="relative w-[2160px] h-[1395px] overflow-hidden bg-black font-['Liberation_Sans','Noto_Sans_CJK_SC',sans-serif] text-[#c0c0c0]">
      {/* title bar */}
      <div className="h-[36px] bg-[#f0f0f0] border-b-2 border-[#a0a0a0] flex items-center text-[18px] text-[#333333]">
        <div className="w-[208px] shrink-0 flex items-center pl-[4px] gap-[4px]">
          <Logo />
          <span className="whitespace-nowrap">通达信金融终端</span>
        </div>
        <div className="w-[954px] shrink-0 flex gap-[36px] whitespace-nowrap">
          <span>行情</span><span>市场</span><span>资讯</span><span>数据</span><span>专题</span><span>发现</span><span>交易</span><span>行业</span><span>热点</span><span className="text-[16px]">L1L2</span>
        </div>
        <div className="w-[434px] shrink-0 flex gap-[24px] text-[19px] text-[#f03030] whitespace-nowrap">
          <span>交易未登录</span><span>仁智股份</span>
        </div>
        <div className="w-[282px] shrink-0 flex gap-[21px] whitespace-nowrap">
          <span>功能</span><span>版面</span><span>公式</span><span>选项</span><span>帮助</span>
        </div>
        <div className="h-full w-[121px] shrink-0 border-x border-[#a8a8a8] flex items-center pl-[5px] gap-[8px] whitespace-nowrap">
          <span className="text-[17px] tracking-[0.4px]">07:46:49</span><span>周五</span>
        </div>
        <div className="flex-1 flex items-center pl-[24px]">
          <svg width="14" height="18" viewBox="0 0 14 18"><path d="M10 2 L4 9 L10 16" stroke="#333" strokeWidth="2.4" fill="none" /></svg>
          <svg className="ml-[23px]" width="14" height="18" viewBox="0 0 14 18"><path d="M1 9 H13" stroke="#333" strokeWidth="3" /></svg>
          <svg className="ml-[22px]" width="18" height="18" viewBox="0 0 18 18"><rect x="6" y="2" width="10" height="10" fill="none" stroke="#333" strokeWidth="2.4" /><rect x="2" y="6" width="10" height="10" fill="#f0f0f0" stroke="#333" strokeWidth="2.4" /></svg>
          <svg className="ml-[19px]" width="16" height="18" viewBox="0 0 16 18"><path d="M2 2 L14 16 M14 2 L2 16" stroke="#333" strokeWidth="2.2" /></svg>
        </div>
      </div>

      <div className="h-[1323px] flex">
        <div className="w-[1715px] shrink-0 flex flex-col">
          {/* period toolbar */}
          <div className="h-[31px] shrink-0 border-b-2 border-[#a80000] flex items-center text-[18px] text-[#c0c0c0]">
            <div className="w-[35px] h-full shrink-0 border-x border-[#a00000] flex items-center justify-center"><PanelIcon /></div>
            <div className="flex-1 flex items-center gap-[13.5px] pl-[7px] pt-[2px] whitespace-nowrap">
              <span>分时</span><span>1分钟</span><span>5分钟</span><span>15分钟</span><span>30分钟</span><span>60分钟</span>
              <span className="text-[#40ffff]">日线</span><span>周线</span><span>月线</span><span>多周期</span>
              <span>更多 ›</span>
            </div>
            <div className="flex h-full shrink-0">
              {["复权", "叠加", "统计", "画线", "F10", "标记", "-自选", "返回"].map((t) => (
                <div key={t} className="w-[52.75px] h-full pt-[1px] flex items-center justify-center border-l border-[#a00000] whitespace-nowrap">{t}</div>
              ))}
            </div>
          </div>

          {/* main chart */}
          <div className="h-[698px] shrink-0 flex">
            <div className="w-[1639px] shrink-0 flex flex-col border-b-2 border-[#c00000]">
              <div className="h-[29px] shrink-0 flex items-center pl-[4px] text-[17px] whitespace-nowrap">
                <span className="text-[18px]">仁智股份(日线)</span>
                <span className="ml-[9px] w-[24px] flex"><CircleChevron /></span>
                <span className="w-[87px] text-[#e8e8e8]">MA5: 4.07</span>
                <span className="w-[98px] text-[#e8e800]">MA10: 4.14</span>
                <span className="w-[97px] text-[#f000f0]">MA20: 4.14</span>
                <span className="w-[98px] text-[#00e600]">MA60: 4.08</span>
                <span className="w-[108px] text-[#b0b0b0]">MA120: 3.90</span>
                <span className="w-[100px] text-[#0000e6]">MA250: 4.04</span>
                <span className="ml-auto text-[#707070] flex items-center gap-[17px] pr-[6px]">
                  <svg width="16" height="16" viewBox="0 0 16 16"><path d="M8 1 L14 8 L8 15 L2 8 Z" fill="none" stroke="#707070" /></svg>
                  <PanelIcon />
                </span>
              </div>
              <MainChart />
            </div>
            <MainAxis />
          </div>

          {/* lower indicator */}
          <div className="h-[518px] shrink-0 flex">
            <div className="w-[1639px] shrink-0 flex flex-col">
              <div className="h-[24px] pt-[1px] shrink-0 flex items-center pl-[4px] text-[18px] whitespace-nowrap">
                <CircleChevron />
                <span className="ml-[4px] w-[117px]">久跌回暖选股</span>
                <span className="text-[#e8e8e8]">久跌回暖: 0.00</span>
              </div>
              <LowChart />
            </div>
            <LowAxis />
          </div>

          <XAxis />

          {/* tool rows */}
          <div className="h-[26px] shrink-0 border-y border-[#a00000] flex items-center text-[17px]">
            <Cell w="w-[46px]">指标</Cell><Cell w="w-[47px]">窗口</Cell><Cell w="w-[63px]">MACD</Cell><Cell w="w-[88px]">VOL-TDX</Cell><Cell w="w-[42px]">CCI</Cell>
            <Cell w="w-[84px]">趋势动力</Cell><Cell w="w-[85px]">主力监控</Cell><Cell w="w-[84px]">私募主图</Cell><Cell w="w-[45px]">MA2</Cell><Cell w="w-[84px]">测试主图</Cell>
            <Cell w="w-[95px]">测试幅图A</Cell><Cell w="w-[97px]">测试幅图B</Cell><Cell w="w-[47px]">更多</Cell><Cell w="w-[49px]" c="text-[#40ffff]">设置</Cell>
          </div>
          <div className="h-[27px] shrink-0 border-b border-[#a00000] flex items-center text-[17px]">
            <Cell w="w-[61px]">扩展∧</Cell><Cell w="w-[83px]">关联报价</Cell><Cell w="w-[85px]">资金分布</Cell>
            <Cell w="w-[85px]" c="text-[#c8c800]">综合资讯</Cell><Cell w="w-[83px]" c="text-[#c8c800]">行业资讯</Cell><Cell w="w-[84px]" c="text-[#c8c800]">互动问答</Cell>
            <Cell w="w-[139px]">普及版功能说明</Cell>
          </div>
        </div>
        <RightPanel />
        <Sidebar />
      </div>

      {/* index status bar */}
      <div className="h-[36px] pt-[3px] bg-[#f0f0f0] flex items-center pl-[3px] text-[20px] font-bold whitespace-nowrap text-[#008a00]">
        <svg width="22" height="21" viewBox="0 0 22 21" className="shrink-0">
          <rect x="1" y="1" width="18" height="19" rx="3" fill="#f0b020" stroke="#c08010" />
          <rect x="5" y="5" width="10" height="11" fill="#fff0b0" stroke="#c08010" />
        </svg>
        <span className="w-[54px] text-[24px] font-normal text-[#222222]">上证</span>
        <span className="w-[94px]">3009.41</span>
        <span className="w-[81px]">-13.67</span>
        <span className="w-[88px]">-0.45%</span>
        <span className="w-[94px] text-[#111111]">3119<span className="text-[24px] font-normal">亿</span></span>
        <span className="w-[54px] text-[24px] font-normal text-[#222222]">深证</span>
        <span className="w-[94px]">9734.77</span>
        <span className="w-[81px]">-91.96</span>
        <span className="w-[87px]">-0.94%</span>
        <span className="w-[99px] text-[#111111]">4548<span className="text-[24px] font-normal">亿</span></span>
        <span className="w-[52px] text-[24px] font-normal text-[#222222]">中小</span>
        <span className="w-[94px]">6178.85</span>
        <span>-69.57</span>
      </div>

      <Watermark />
    </div>
  );
}
